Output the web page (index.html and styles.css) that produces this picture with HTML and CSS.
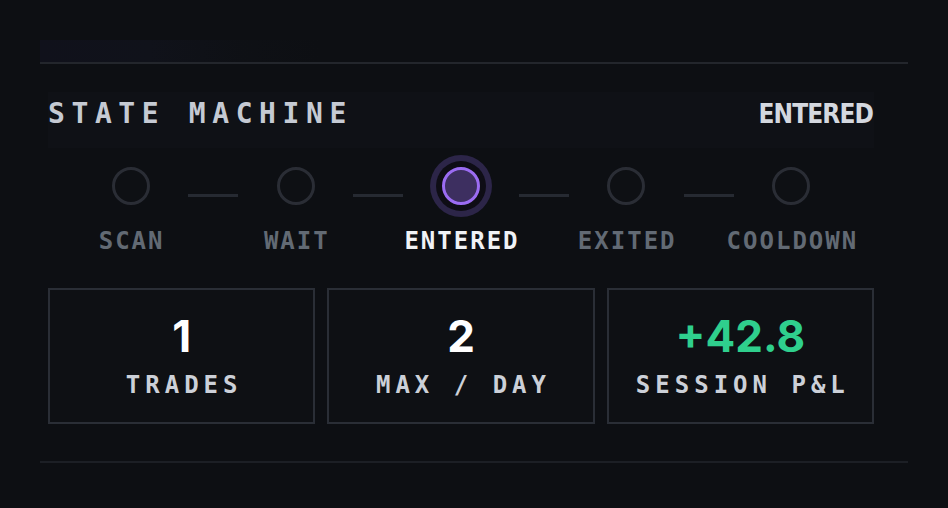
FILE: index.html
```html
<!DOCTYPE html>
<html lang="en">
<head>
<meta charset="utf-8">
<title>State Machine</title>
<link rel="stylesheet" href="styles.css">
</head>
<body>
<div class="frame">
  <div class="topbar"><div class="tab"></div></div>
  <div class="panel">
    <div class="header">
      <span class="title">STATE MACHINE</span>
      <span class="current">ENTERED</span>
    </div>
    <div class="steps">
      <div class="step"><div class="dot"></div><div class="label">SCAN</div></div>
      <div class="step"><div class="dot"></div><div class="label">WAIT</div></div>
      <div class="step active"><div class="dot"></div><div class="label">ENTERED</div></div>
      <div class="step"><div class="dot"></div><div class="label">EXITED</div></div>
      <div class="step last"><div class="dot"></div><div class="label">COOLDOWN</div></div>
    </div>
    <div class="cards">
      <div class="card"><div class="num">1</div><div class="cap">TRADES</div></div>
      <div class="card"><div class="num">2</div><div class="cap">MAX / DAY</div></div>
      <div class="card"><div class="num green">+42.8</div><div class="cap">SESSION P&amp;L</div></div>
    </div>
  </div>
</div>
</body>
</html>
```
FILE: styles.css
```css
html, body {
  margin: 0;
  padding: 0;
  background: #0d0f13;
}
body {
  font-family: "DejaVu Sans Mono", monospace;
  width: 948px;
  height: 508px;
  overflow: hidden;
}
.frame {
  margin: 40px 40px 0;
  width: 868px;
}
.topbar {
  height: 22px;
  border-bottom: 2px solid #23262c;
}
.tab {
  width: 280px;
  height: 22px;
  background: linear-gradient(90deg, #10111b 0, #10121a 110px, rgba(16,18,24,0.4) 200px, rgba(13,15,19,0) 280px);
}
.panel {
  padding: 28px 34px 37px 8px;
  border-bottom: 2px solid #1c1f25;
}
.header {
  height: 48px;
  padding-top: 8px;
  display: flex;
  justify-content: space-between;
  align-items: flex-start;
  background: #0f1116;
}
.title {
  font-size: 28px;
  line-height: 28px;
  font-weight: bold;
  letter-spacing: 6.6px;
  color: #c5cad3;
}
.current {
  font-family: "DejaVu Sans Condensed", "DejaVu Sans", sans-serif;
  font-size: 26px;
  line-height: 28px;
  font-weight: bold;
  color: #d4d8df;
  letter-spacing: -0.9px;
  margin-right: 1px;
}
.steps {
  display: grid;
  grid-template-columns: repeat(5, 1fr);
  margin-top: 19px;
}
.step {
  position: relative;
  display: flex;
  flex-direction: column;
  align-items: center;
}
.step::after {
  content: "";
  position: absolute;
  left: calc(100% - 25px);
  top: 27px;
  width: 50px;
  height: 3px;
  background: #262a32;
}
.step.last::after {
  display: none;
}
.dot {
  width: 32px;
  height: 32px;
  border: 3px solid #2a2d35;
  border-radius: 50%;
  background: #0e1014;
}
.step.active .dot {
  border-color: #9b6cf2;
  background: #3d2f60;
  box-shadow: 0 0 0 6px #0e0d15, 0 0 0 12px #2c2548;
}
.label {
  margin-top: 24px;
  font-size: 24px;
  line-height: 24px;
  font-weight: bold;
  letter-spacing: 2px;
  margin-right: -2px;
  color: #626a74;
}
.step.active .label {
  color: #f0f2f5;
}
.cards {
  display: grid;
  grid-template-columns: repeat(3, 1fr);
  gap: 12px;
  margin-top: 35px;
}
.card {
  border: 2px solid #2a2e36;
  background: #0e1014;
  padding: 24px 0 25px;
  display: flex;
  flex-direction: column;
  align-items: center;
}
.num {
  font-family: Inter, "Noto Sans", sans-serif;
  font-size: 44px;
  line-height: 44px;
  font-weight: 700;
  color: #ffffff;
}
.num.green {
  color: #2fcf8d;
}
.cap {
  margin-top: 15px;
  font-size: 24px;
  line-height: 24px;
  font-weight: bold;
  letter-spacing: 5px;
  margin-right: -5px;
  color: #ccd0d8;
}
```
